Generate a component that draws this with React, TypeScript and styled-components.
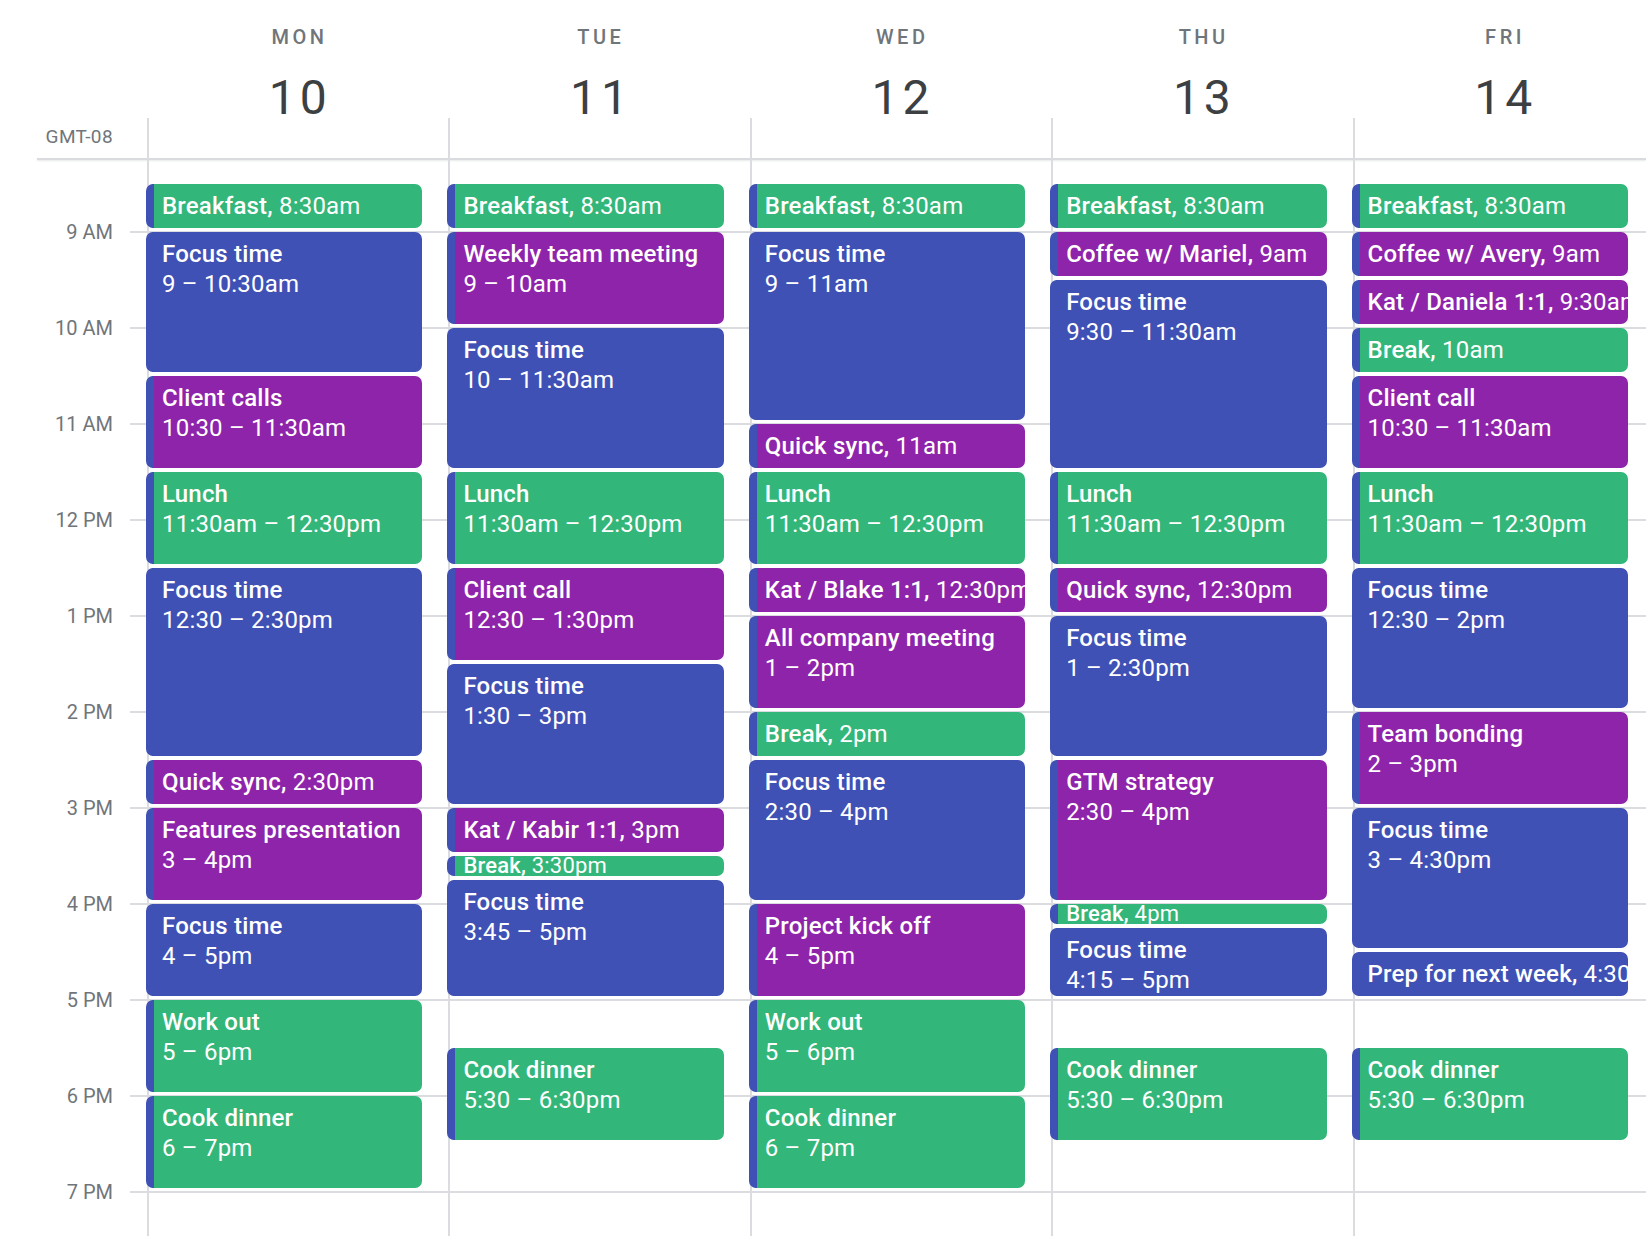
import React from 'react'
import styled, { createGlobalStyle } from 'styled-components'

type Tone = 'green' | 'blue' | 'purple'

interface CalEvent {
  title: string
  time: string
  start: number
  end: number
  tone: Tone
}

interface Day {
  name: string
  date: number
  events: CalEvent[]
}

const tones: Record<Tone, string> = {
  green: '#33b679',
  blue: '#3f51b5',
  purple: '#8e24aa',
}

const ACCENT = '#3f51b5'
const LINE = '#dadce0'
const SLOT = 24 // px per 15 minutes
const GRID_START = 8.25 // top of the grid is 8:15am
const ROWS = 45
const COLS = '147px repeat(5, 301.4px)'

const ev = (title: string, time: string, start: number, end: number, tone: Tone): CalEvent => ({
  title,
  time,
  start,
  end,
  tone,
})

const days: Day[] = [
  {
    name: 'MON',
    date: 10,
    events: [
      ev('Breakfast', '8:30am', 8.5, 9, 'green'),
      ev('Focus time', '9 – 10:30am', 9, 10.5, 'blue'),
      ev('Client calls', '10:30 – 11:30am', 10.5, 11.5, 'purple'),
      ev('Lunch', '11:30am – 12:30pm', 11.5, 12.5, 'green'),
      ev('Focus time', '12:30 – 2:30pm', 12.5, 14.5, 'blue'),
      ev('Quick sync', '2:30pm', 14.5, 15, 'purple'),
      ev('Features presentation', '3 – 4pm', 15, 16, 'purple'),
      ev('Focus time', '4 – 5pm', 16, 17, 'blue'),
      ev('Work out', '5 – 6pm', 17, 18, 'green'),
      ev('Cook dinner', '6 – 7pm', 18, 19, 'green'),
    ],
  },
  {
    name: 'TUE',
    date: 11,
    events: [
      ev('Breakfast', '8:30am', 8.5, 9, 'green'),
      ev('Weekly team meeting', '9 – 10am', 9, 10, 'purple'),
      ev('Focus time', '10 – 11:30am', 10, 11.5, 'blue'),
      ev('Lunch', '11:30am – 12:30pm', 11.5, 12.5, 'green'),
      ev('Client call', '12:30 – 1:30pm', 12.5, 13.5, 'purple'),
      ev('Focus time', '1:30 – 3pm', 13.5, 15, 'blue'),
      ev('Kat / Kabir 1:1', '3pm', 15, 15.5, 'purple'),
      ev('Break', '3:30pm', 15.5, 15.75, 'green'),
      ev('Focus time', '3:45 – 5pm', 15.75, 17, 'blue'),
      ev('Cook dinner', '5:30 – 6:30pm', 17.5, 18.5, 'green'),
    ],
  },
  {
    name: 'WED',
    date: 12,
    events: [
      ev('Breakfast', '8:30am', 8.5, 9, 'green'),
      ev('Focus time', '9 – 11am', 9, 11, 'blue'),
      ev('Quick sync', '11am', 11, 11.5, 'purple'),
      ev('Lunch', '11:30am – 12:30pm', 11.5, 12.5, 'green'),
      ev('Kat / Blake 1:1', '12:30pm', 12.5, 13, 'purple'),
      ev('All company meeting', '1 – 2pm', 13, 14, 'purple'),
      ev('Break', '2pm', 14, 14.5, 'green'),
      ev('Focus time', '2:30 – 4pm', 14.5, 16, 'blue'),
      ev('Project kick off', '4 – 5pm', 16, 17, 'purple'),
      ev('Work out', '5 – 6pm', 17, 18, 'green'),
      ev('Cook dinner', '6 – 7pm', 18, 19, 'green'),
    ],
  },
  {
    name: 'THU',
    date: 13,
    events: [
      ev('Breakfast', '8:30am', 8.5, 9, 'green'),
      ev('Coffee w/ Mariel', '9am', 9, 9.5, 'purple'),
      ev('Focus time', '9:30 – 11:30am', 9.5, 11.5, 'blue'),
      ev('Lunch', '11:30am – 12:30pm', 11.5, 12.5, 'green'),
      ev('Quick sync', '12:30pm', 12.5, 13, 'purple'),
      ev('Focus time', '1 – 2:30pm', 13, 14.5, 'blue'),
      ev('GTM strategy', '2:30 – 4pm', 14.5, 16, 'purple'),
      ev('Break', '4pm', 16, 16.25, 'green'),
      ev('Focus time', '4:15 – 5pm', 16.25, 17, 'blue'),
      ev('Cook dinner', '5:30 – 6:30pm', 17.5, 18.5, 'green'),
    ],
  },
  {
    name: 'FRI',
    date: 14,
    events: [
      ev('Breakfast', '8:30am', 8.5, 9, 'green'),
      ev('Coffee w/ Avery', '9am', 9, 9.5, 'purple'),
      ev('Kat / Daniela 1:1', '9:30am', 9.5, 10, 'purple'),
      ev('Break', '10am', 10, 10.5, 'green'),
      ev('Client call', '10:30 – 11:30am', 10.5, 11.5, 'purple'),
      ev('Lunch', '11:30am – 12:30pm', 11.5, 12.5, 'green'),
      ev('Focus time', '12:30 – 2pm', 12.5, 14, 'blue'),
      ev('Team bonding', '2 – 3pm', 14, 15, 'purple'),
      ev('Focus time', '3 – 4:30pm', 15, 16.5, 'blue'),
      ev('Prep for next week', '4:30pm', 16.5, 17, 'blue'),
      ev('Cook dinner', '5:30 – 6:30pm', 17.5, 18.5, 'green'),
    ],
  },
]

const hours = [
  { h: 9, label: '9 AM' },
  { h: 10, label: '10 AM' },
  { h: 11, label: '11 AM' },
  { h: 12, label: '12 PM' },
  { h: 13, label: '1 PM' },
  { h: 14, label: '2 PM' },
  { h: 15, label: '3 PM' },
  { h: 16, label: '4 PM' },
  { h: 17, label: '5 PM' },
  { h: 18, label: '6 PM' },
  { h: 19, label: '7 PM' },
]

const gridLine = (t: number) => (t - GRID_START) * 4 + 1

const hourLines = `repeating-linear-gradient(to bottom, transparent 0 71px, ${LINE} 71px 73px, transparent 73px 96px)`

const GlobalStyle = createGlobalStyle`
  html, body {
    margin: 0;
    padding: 0;
    background: #fff;
  }
`

const Page = styled.div`
  width: 1646px;
  height: 1236px;
  overflow: hidden;
  background: #fff;
  font-family: Roboto, 'Liberation Sans', Arial, sans-serif;
`

const Header = styled.div`
  display: grid;
  grid-template-columns: ${COLS};
  height: 158px;
`

const Zone = styled.div`
  display: flex;
  align-items: flex-end;
  justify-content: flex-end;
  padding: 0 34px 10px 0;
  font-size: 19px;
  line-height: 22px;
  letter-spacing: 0.4px;
  color: #70757a;
`

const DayHead = styled.div`
  display: flex;
  flex-direction: column;
  align-items: center;
  padding-top: 25px;
  background: linear-gradient(${LINE}, ${LINE}) left bottom / 2px 40px no-repeat;
`

const DayName = styled.div`
  font-size: 20px;
  line-height: 24px;
  font-weight: 500;
  letter-spacing: 3.5px;
  padding-left: 3.5px;
  color: #70757a;
`

const DayNum = styled.div`
  margin-top: 21px;
  font-size: 48px;
  line-height: 56px;
  letter-spacing: 4px;
  padding-left: 4px;
  color: #3c4043;
`

const Rule = styled.div`
  height: 2px;
  margin-left: 37px;
  background: #d9dbde;
  box-shadow: 0 1px 2px rgba(60, 64, 67, 0.12);
`

const Body = styled.div`
  display: grid;
  grid-template-columns: ${COLS};
`

const Gutter = styled.div`
  display: grid;
  grid-template-rows: repeat(${ROWS}, ${SLOT}px);
  background: ${hourLines} right top / 17px 100% no-repeat;
`

const HourLabel = styled.div<{ $line: number }>`
  grid-row: ${(p) => p.$line - 1} / ${(p) => p.$line + 1};
  align-self: center;
  justify-self: end;
  padding-right: 34px;
  font-size: 20px;
  line-height: 22px;
  color: #70757a;
`

const DayColumn = styled.div`
  display: grid;
  grid-template-rows: repeat(${ROWS}, ${SLOT}px);
  grid-template-columns: minmax(0, 1fr);
  background:
    linear-gradient(${LINE}, ${LINE}) left top / 2px 100% no-repeat,
    ${hourLines};
`

const Card = styled.div<{ $tone: Tone; $from: number; $to: number; $tiny: boolean }>`
  grid-row: ${(p) => p.$from} / ${(p) => p.$to};
  margin: 0 26px 4px -1px;
  min-width: 0;
  overflow: hidden;
  white-space: nowrap;
  background: ${(p) => tones[p.$tone]};
  border-left: 8px solid ${ACCENT};
  border-radius: 7px;
  padding: ${(p) => (p.$tiny ? '0 0 0 8px' : '7px 0 0 8px')};
  color: #fff;
  letter-spacing: 0.2px;
  font-size: ${(p) => (p.$tiny ? '22px' : '24px')};
  line-height: ${(p) => (p.$tiny ? '20px' : '30px')};
`

const CardLine = styled.div``

const Title = styled.span`
  font-weight: 500;
`

function EventCard({ event }: { event: CalEvent }) {
  const length = event.end - event.start
  return (
    <Card
      $tone={event.tone}
      $from={gridLine(event.start)}
      $to={gridLine(event.end)}
      $tiny={length < 0.5}
    >
      {length > 0.5 ? (
        <>
          <CardLine>
            <Title>{event.title}</Title>
          </CardLine>
          <CardLine>{event.time}</CardLine>
        </>
      ) : (
        <CardLine>
          <Title>{event.title},</Title> {event.time}
        </CardLine>
      )}
    </Card>
  )
}

export default function App() {
  return (
    <>
      <GlobalStyle />
      <Page>
        <Header>
          <Zone>GMT-08</Zone>
          {days.map((d) => (
            <DayHead key={d.name}>
              <DayName>{d.name}</DayName>
              <DayNum>{d.date}</DayNum>
            </DayHead>
          ))}
        </Header>
        <Rule />
        <Body>
          <Gutter>
            {hours.map((h) => (
              <HourLabel key={h.h} $line={gridLine(h.h)}>
                {h.label}
              </HourLabel>
            ))}
          </Gutter>
          {days.map((d) => (
            <DayColumn key={d.name}>
              {d.events.map((e, i) => (
                <EventCard key={i} event={e} />
              ))}
            </DayColumn>
          ))}
        </Body>
      </Page>
    </>
  )
}
